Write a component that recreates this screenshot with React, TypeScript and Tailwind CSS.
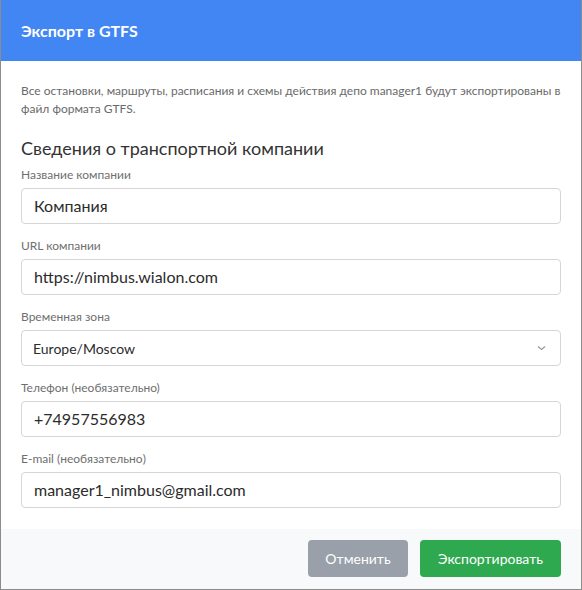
const fields = [
  { label: "Название компании", value: "Компания" },
  { label: "URL компании", value: "https://nimbus.wialon.com" },
];

const optional = [
  { label: "Телефон (необязательно)", value: "+74957556983" },
  { label: "E-mail (необязательно)", value: "manager1_nimbus@gmail.com" },
];

function Field({ label, value }: { label: string; value: string }) {
  return (
    <div className="mb-[14px]">
      <div className="mb-[5px] text-[12px] leading-4 text-[#6f6f6f]">{label}</div>
      <div className="flex h-[36px] items-center rounded-[4px] border border-[#d6d6d6] bg-white px-[12px] text-[16px] text-[#2b2b2b]">
        {value}
      </div>
    </div>
  );
}

export default function App() {
  return (
    <div
      className="flex h-[590px] w-[582px] flex-col border-x border-b border-[#8c8c8c] bg-white"
      style={{ fontFamily: "Lato, 'Open Sans', sans-serif" }}
    >
      <div className="flex h-[61px] shrink-0 items-center bg-[#4286f4] px-5">
        <h1 className="text-[16px] font-bold text-white">Экспорт в GTFS</h1>
      </div>
      <div className="flex-1 px-5 pt-[21px]">
        <p className="text-[12px] leading-[18px] text-[#6a6a6a]">
          Все остановки, маршруты, расписания и схемы действия депо manager1 будут экспортированы в файл формата GTFS.
        </p>
        <h2 className="mt-[18px] mb-[7px] text-[18px] leading-6 text-[#333]">Сведения о транспортной компании</h2>
        {fields.map((f) => (
          <Field key={f.label} {...f} />
        ))}
        <div className="mb-[14px]">
          <div className="mb-[5px] text-[12px] leading-4 text-[#6f6f6f]">Временная зона</div>
          <div className="flex h-[36px] items-center justify-between rounded-[4px] border border-[#d6d6d6] bg-white px-[11px] text-[14px] text-[#2b2b2b]">
            <span>Europe/Moscow</span>
            <svg width="9" height="6" viewBox="0 0 9 6" className="mr-[3px]">
              <path d="M1 1.5l3.5 3 3.5-3" fill="none" stroke="#9a9aa8" strokeWidth="1.3" />
            </svg>
          </div>
        </div>
        {optional.map((f) => (
          <Field key={f.label} {...f} />
        ))}
      </div>
      <div className="flex h-[60px] shrink-0 items-start justify-end gap-3 bg-[#f8f9fb] px-5 pt-[11px]">
        <button className="h-[37px] w-[100px] rounded-[4px] bg-[#9aa0aa] text-[14px] text-white">Отменить</button>
        <button className="h-[37px] w-[141px] rounded-[4px] bg-[#2fa94f] text-[14px] text-white">Экспортировать</button>
      </div>
    </div>
  );
}
